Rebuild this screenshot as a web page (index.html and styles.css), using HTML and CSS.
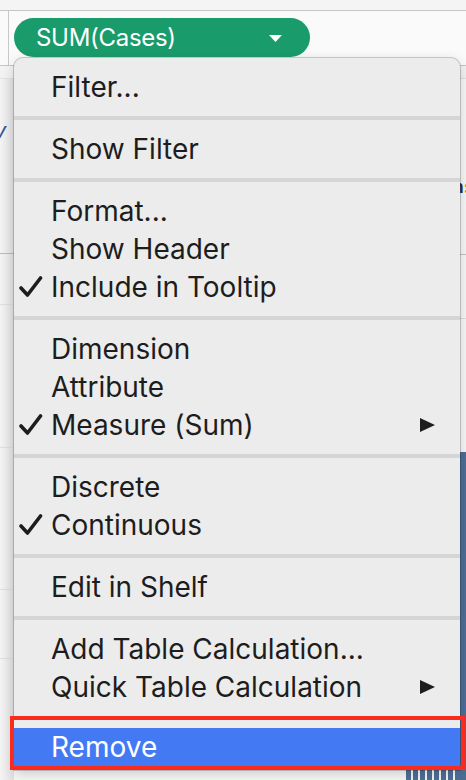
FILE: index.html
```html
<!DOCTYPE html>
<html>
<head>
<meta charset="utf-8">
<link rel="stylesheet" href="styles.css">
</head>
<body>
<div class="app">
  <div class="titlebar"></div>
  <div class="shelf">
    <div class="shelf-corner"></div>
    <div class="pill">
      <span class="pill-label">SUM(Cases)</span>
      <svg class="pill-caret" width="13" height="7" viewBox="0 0 13 7"><polygon points="0,0 13,0 6.5,7" fill="#fff"/></svg>
    </div>
  </div>
  <div class="header-band"></div>
  <div class="pane">
    <div class="lcol">
      <div class="lcell c1"><span class="axis-text">v</span></div>
      <div class="lcell c2"></div>
      <div class="lcell c3"></div>
      <div class="lcell c4"></div>
      <div class="lcell c5"></div>
    </div>
    <div class="center">
      <div class="bars">
        <span></span><span></span><span></span><span></span><span></span><span></span><span></span><span></span>
      </div>
    </div>
    <div class="rcol">
      <div class="rcell r1"><span class="legend-text">n<b>:</b></span></div>
      <div class="rcell r2"></div>
      <div class="rcell r3"></div>
      <div class="rbar"></div>
    </div>
  </div>

  <div class="menu">
    <div class="group">
      <div class="item"><span class="check"></span><span class="label">Filter...</span></div>
    </div>
    <div class="sep"></div>
    <div class="group">
      <div class="item"><span class="check"></span><span class="label">Show Filter</span></div>
    </div>
    <div class="sep"></div>
    <div class="group">
      <div class="item"><span class="check"></span><span class="label">Format...</span></div>
      <div class="item"><span class="check"></span><span class="label">Show Header</span></div>
      <div class="item"><span class="check"><svg width="24" height="22" viewBox="0 0 24 22"><polyline points="2,12 8.5,19 21.5,2" fill="none" stroke="#1d1d1d" stroke-width="3.6" stroke-linecap="round" stroke-linejoin="round"/></svg></span><span class="label">Include in Tooltip</span></div>
    </div>
    <div class="sep"></div>
    <div class="group">
      <div class="item"><span class="check"></span><span class="label">Dimension</span></div>
      <div class="item"><span class="check"></span><span class="label">Attribute</span></div>
      <div class="item"><span class="check"><svg width="24" height="22" viewBox="0 0 24 22"><polyline points="2,12 8.5,19 21.5,2" fill="none" stroke="#1d1d1d" stroke-width="3.6" stroke-linecap="round" stroke-linejoin="round"/></svg></span><span class="label">Measure (Sum)</span><svg class="arrow" width="15" height="14" viewBox="0 0 15 14"><polygon points="0,0 15,7 0,14" fill="#1e1e1e"/></svg></div>
    </div>
    <div class="sep"></div>
    <div class="group">
      <div class="item"><span class="check"></span><span class="label">Discrete</span></div>
      <div class="item"><span class="check"><svg width="24" height="22" viewBox="0 0 24 22"><polyline points="2,12 8.5,19 21.5,2" fill="none" stroke="#1d1d1d" stroke-width="3.6" stroke-linecap="round" stroke-linejoin="round"/></svg></span><span class="label">Continuous</span></div>
    </div>
    <div class="sep"></div>
    <div class="group">
      <div class="item"><span class="check"></span><span class="label">Edit in Shelf</span></div>
    </div>
    <div class="sep"></div>
    <div class="group">
      <div class="item"><span class="check"></span><span class="label">Add Table Calculation...</span></div>
      <div class="item"><span class="check"></span><span class="label">Quick Table Calculation</span><svg class="arrow" width="15" height="14" viewBox="0 0 15 14"><polygon points="0,0 15,7 0,14" fill="#1e1e1e"/></svg></div>
    </div>
    <div class="sep"></div>
    <div class="group last">
      <div class="item selected"><span class="check"></span><span class="label">Remove</span></div>
    </div>
  </div>
  <div class="highlight-box"></div>
</div>
</body>
</html>
```

FILE: styles.css
```css
* { box-sizing: border-box; }
html, body { margin: 0; padding: 0; }
body {
  background: #f7f7f7;
  font-family: Inter, "Noto Sans", "Liberation Sans", sans-serif;
}
.app {
  position: relative;
  width: 466px;
  height: 780px;
  overflow: hidden;
  display: flex;
  flex-direction: column;
}
.titlebar {
  height: 11px;
  background: #f4f4f4;
  border-bottom: 1px solid #c6c6c6;
  flex: none;
}
.shelf {
  height: 54px;
  display: flex;
  flex: none;
  background: #fafafa;
}
.shelf-corner {
  width: 9px;
  border-right: 1px solid #c8c8c8;
}
.pill {
  margin-left: 5px;
  margin-top: 7px;
  width: 296px;
  height: 39px;
  border-radius: 20px;
  background: #1a9b6b;
  color: #fff;
  display: flex;
  align-items: center;
  justify-content: space-between;
  padding: 0 28px 0 22px;
}
.pill-label {
  font-size: 24px;
  letter-spacing: -0.3px;
}
.pill-caret { margin-top: 1px; }
.header-band {
  height: 14px;
  flex: none;
  border-top: 1px solid #c6c6c6;
  border-bottom: 1px solid #e1e1e1;
  background: #f3f3f3;
}
.pane {
  flex: 1;
  display: flex;
  background: #f8f8f8;
}
.lcol {
  width: 14px;
  display: flex;
  flex-direction: column;
  background: linear-gradient(to right, #f4f4f4, #e2e2e2);
}
.lcell { position: relative; flex: none; }
.c1 { height: 175px; border-bottom: 1px solid #b9b9b9; }
.c2 { height: 51px; border-bottom: 1px solid #dedede; }
.c3 { height: 143px; border-bottom: 1px solid #dedede; }
.c4 { height: 142px; border-bottom: 1px solid #dedede; }
.c5 { height: 69px; border-bottom: 1px solid #dedede; }
.axis-text {
  position: absolute;
  left: -6px;
  top: 38px;
  font-size: 22px;
  font-style: italic;
  color: #2f5a9a;
}
.center {
  flex: 1;
  display: flex;
  flex-direction: column;
  justify-content: flex-end;
}
.bars {
  height: 10px;
  display: flex;
  justify-content: flex-end;
  gap: 2px;
}
.bars span {
  width: 5px;
  background: #4f6f99;
}
.rcol {
  width: 6px;
  display: flex;
  flex-direction: column;
}
.rcell { position: relative; flex: none; }
.r1 { height: 176px; border-bottom: 1px solid #c2c2c2; }
.r2 { height: 64px; border-bottom: 1px solid #e0e0e0; }
.r3 { height: 133px; }
.rbar { flex: 1; background: #4e6d97; }
.legend-text {
  position: absolute;
  left: -7px;
  top: 98px;
  font-size: 17px;
  font-weight: 700;
  color: #1f3357;
}
.legend-text b { color: #c79a2a; }

.menu {
  position: absolute;
  left: 14px;
  top: 58px;
  width: 446px;
  background: #ececec;
  border-radius: 9px 9px 0 0;
  box-shadow: 0 0 0 1px rgba(0,0,0,0.18), 0 4px 14px rgba(0,0,0,0.18);
  padding-bottom: 4px;
  color: #1d1d1d;
  font-size: 28px;
}
.group { padding: 10px 0; }
.group.last { padding: 8px 0 0; }
.sep { height: 4px; background: #d5d5d5; }
.item {
  height: 38px;
  display: flex;
  align-items: center;
  padding-right: 25px;
}
.check {
  width: 37px;
  flex: none;
  display: flex;
  align-items: center;
  padding-left: 5px;
}
.check svg { display: block; }
.label { flex: 1; white-space: nowrap; }
.arrow { flex: none; }
.item.selected {
  background: #437af4;
  color: #fff;
}
.highlight-box {
  position: absolute;
  left: 10px;
  top: 716px;
  width: 455px;
  height: 54px;
  border: 4px solid #f92b1f;
}
```
